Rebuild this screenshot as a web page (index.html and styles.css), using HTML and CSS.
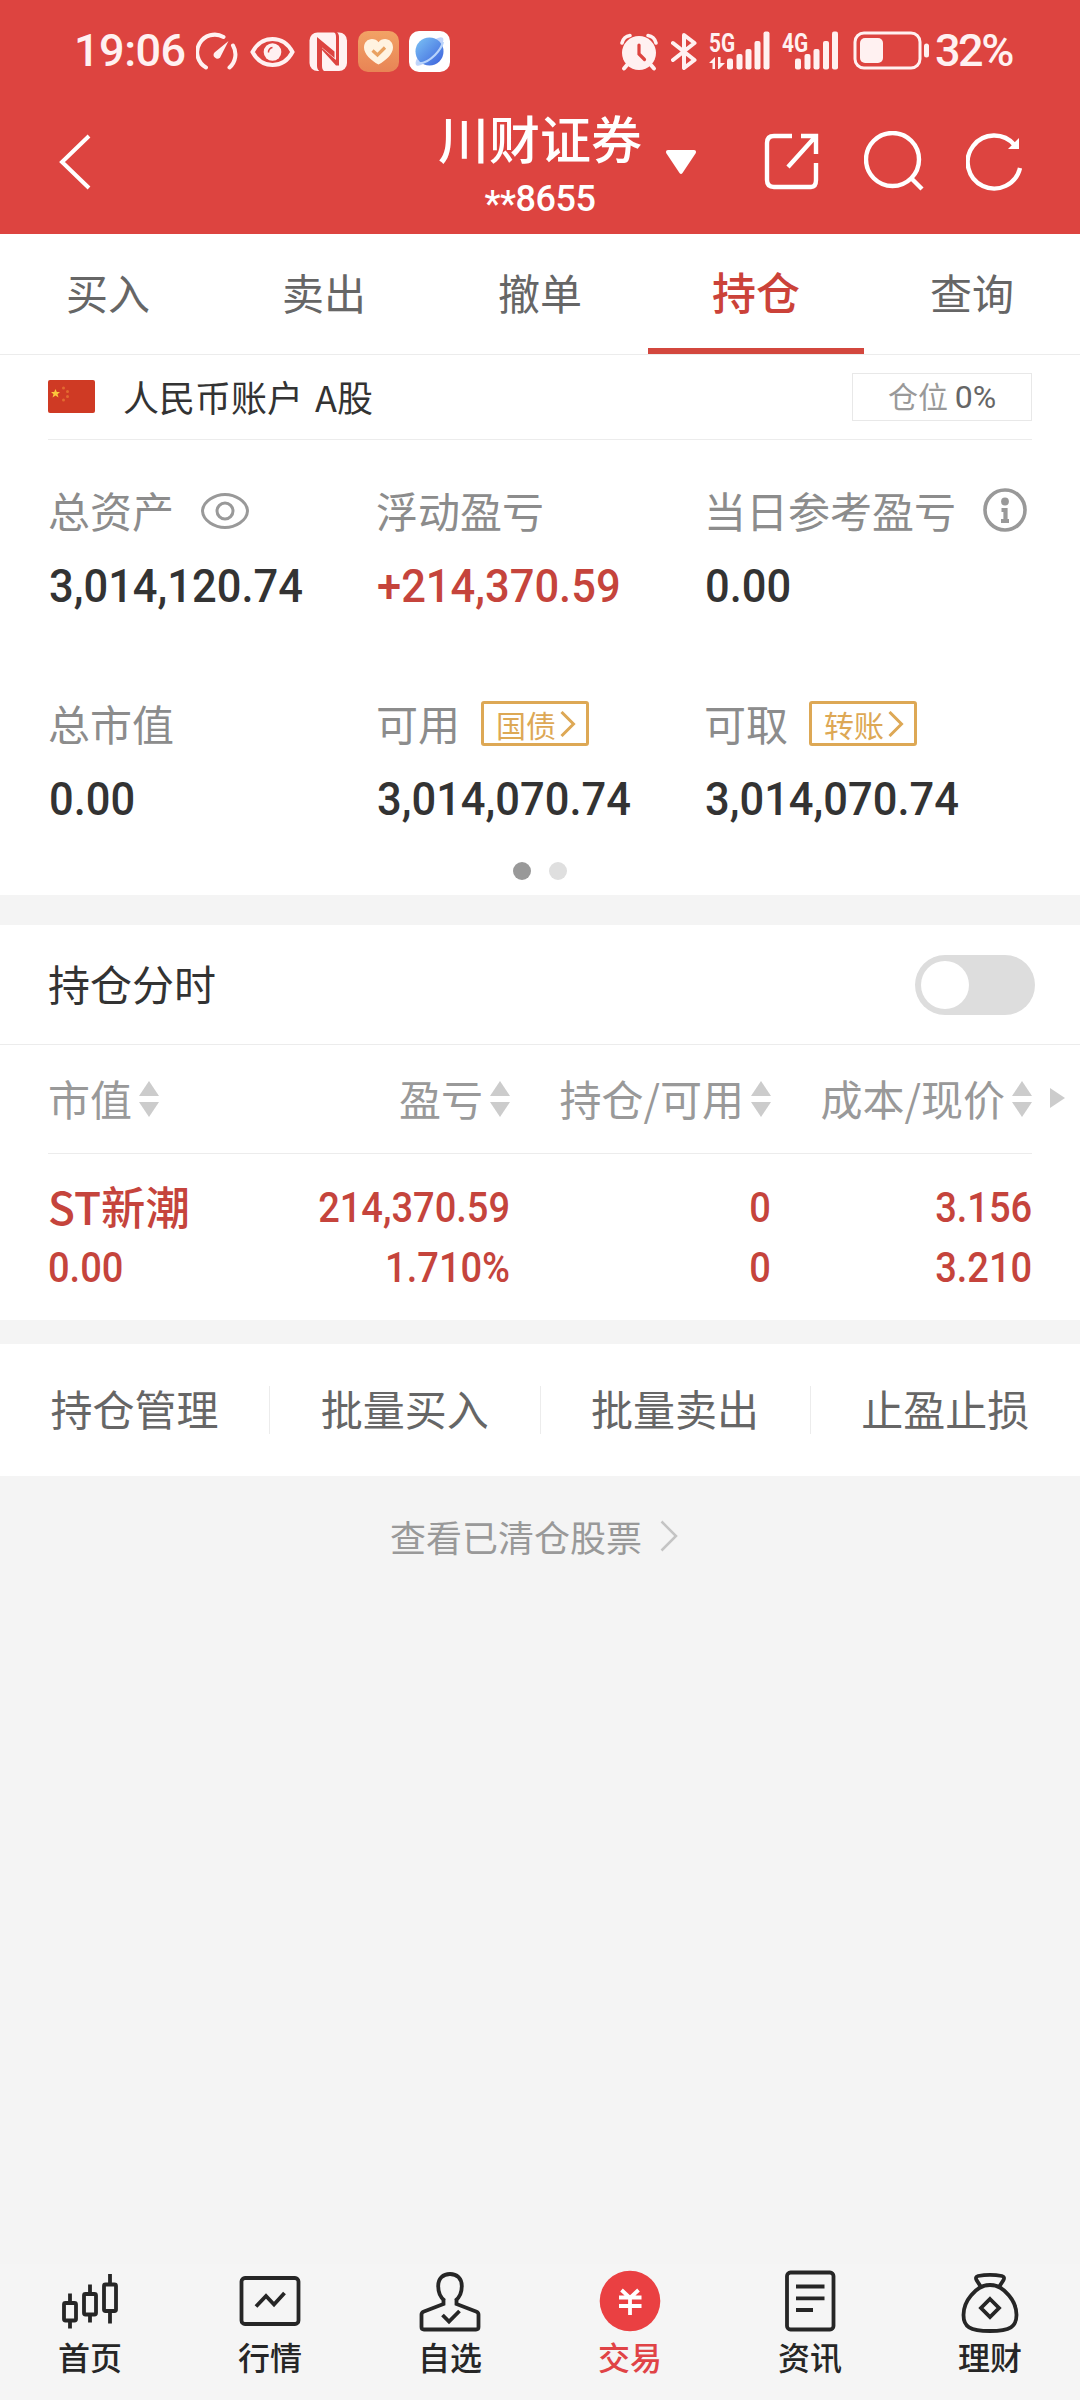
FILE: index.html
```html
<!DOCTYPE html>
<html lang="zh-CN">
<head>
  <meta charset="UTF-8">
  <title>持仓</title>
  <link rel="stylesheet" href="styles.css">
</head>
<body>
  <header class="header">
    <div class="status">
      <div class="status-left">
        <span class="clock">19:06</span>
        <svg class="gauge" width="42" height="42" viewBox="0 0 42 42" fill="none" stroke="#fff1f1" stroke-width="4" stroke-linecap="round">
          <path d="M10 37.5A17.5 17.5 0 0 1 27.5 7"/>
          <path d="M37 15.5A17.5 17.5 0 0 1 33.5 37.5"/>
          <path d="M32.5 11L18.500 22.500a3.800 3.800 0 0 0 5.500 5.200Z" fill="#fff1f1" stroke="none"/>
        </svg>
        <svg class="eye-on" width="48" height="42" viewBox="0 0 48 42" fill="none" stroke="#fff1f1" stroke-width="4">
          <path d="M3.5 22C8 13.500 15 9 23.500 9s15.500 4.500 20 13c-4.500 8.500-11.500 13-20 13S8 30.500 3.500 22Z"/>
          <circle cx="23.500" cy="22" r="8.800" fill="#fff1f1" stroke="none"/>
          <path d="M19.500 22.500a4.500 4.500 0 0 1 4-5" stroke="#dd4440" stroke-width="1.500"/>
        </svg>
        <svg class="nfc" width="40" height="42" viewBox="0 0 40 42">
          <rect x="1.500" y="2.500" width="37.500" height="38.500" rx="8" fill="#fff1f1"/>
          <g fill="#dd4440">
            <path d="M13 42c-2.500-1-4-3-4-6V7l17.500 14.500V28L14 17.500V36c0 3 1 4.500 3 6Z" fill-rule="evenodd"/>
            <path d="M25 1.500c2.500 1 3 3 3 5.500v15l3 3V7c0-2.500-1-4.500-3-5.500ZM14 18v2l14 15.500h3V24l-3-2v8Z"/>
          </g>
        </svg>
        <svg class="app" width="41" height="42" viewBox="0 0 41 42">
          <defs><linearGradient id="health" x1="0" y1="0" x2="0" y2="1"><stop offset="0" stop-color="#f2a265"/><stop offset="1" stop-color="#e88455"/></linearGradient></defs>
          <rect y="1" width="41" height="41" rx="10" fill="url(#health)"/>
          <path d="M20.500 34.500C13 30.500 6 24 6 17.500 6 12.500 9.500 9 14 9c2.500 0 5 1.200 6.500 3.200C22 10.200 24.500 9 27 9c4.500 0 8 3.500 8 8.500 0 6.500-7 13-14.500 17Z" fill="#fff3e0"/>
          <path d="M14.500 20.500l5 4.500 7.500-7.500" fill="none" stroke="#e9a260" stroke-width="3.200"/>
        </svg>
        <svg class="app" width="41" height="42" viewBox="0 0 41 42">
          <defs><linearGradient id="planet" x1="0" y1="0" x2="1" y2="1"><stop offset="0" stop-color="#7cc3f5"/><stop offset="1" stop-color="#3b60dc"/></linearGradient></defs>
          <rect y="1" width="41" height="41" rx="10" fill="#fff"/>
          <ellipse cx="20.500" cy="21.500" rx="19" ry="6" transform="rotate(-46 20.500 21.500)" fill="#c3d5fa"/>
          <circle cx="20.500" cy="21.500" r="14" fill="url(#planet)"/>
          <path d="M8 33c5 1 12-2 18-8 4.500-4.500 7-9 8-13" fill="none" stroke="#b9d4fb" stroke-width="2.200"/>
        </svg>
      </div>
      <div class="status-right">
        <svg class="alarm" width="38" height="42" viewBox="0 0 38 42" fill="none" stroke="#fff1f1" stroke-width="4" stroke-linecap="round">
          <circle cx="19" cy="23" r="17" fill="#fff1f1" stroke="none"/>
          <path d="M2 13c1-4 4-7 8-7.500M36 13c-1-4-4-7-8-7.500" stroke-width="3.500"/>
          <path d="M7 35l-3 3.500M31 35l3 3.500"/>
          <path d="M19 15v9l5.500 5.500" stroke="#dd4440" stroke-width="3.200"/>
        </svg>
        <svg class="bluetooth" width="26" height="42" viewBox="0 0 26 42" fill="none" stroke="#fff1f1" stroke-width="4" stroke-linecap="round" stroke-linejoin="round">
          <path d="M2 13l21.500 17-10.500 8V5l10.500 8L2 30"/>
        </svg>
        <div class="signal">
          <span class="net">5G</span>
          <svg width="62" height="42" viewBox="0 0 62 42" fill="#fff1f1">
            <path d="M0 33l6-6v12H3.500v-6ZM9 27h2.500v6H16l-6 6H9Z"/>
            <rect x="18" y="28.500" width="6" height="11" rx="2"/>
            <rect x="27.500" y="24" width="6" height="15.500" rx="2"/>
            <rect x="36.500" y="19" width="6" height="20.500" rx="2"/>
            <rect x="45.500" y="11" width="6" height="28.500" rx="2"/>
            <rect x="54.500" y="1.500" width="6" height="38" rx="2"/>
          </svg>
        </div>
        <div class="signal second">
          <span class="net">4G</span>
          <svg width="62" height="42" viewBox="0 0 62 42" fill="#fff1f1">
            <rect x="13" y="28.500" width="6" height="11" rx="2"/>
            <rect x="22.500" y="24" width="6" height="15.500" rx="2"/>
            <rect x="31.500" y="19" width="6" height="20.500" rx="2"/>
            <rect x="41" y="11" width="6" height="28.500" rx="2"/>
            <rect x="50" y="1.500" width="6" height="38" rx="2"/>
          </svg>
        </div>
        <svg class="battery" width="78" height="42" viewBox="0 0 78 42">
          <rect x="2" y="3" width="65" height="35" rx="9" fill="none" stroke="#fff1f1" stroke-width="3"/>
          <rect x="7" y="8" width="23" height="25" rx="5" fill="#fff1f1"/>
          <rect x="71" y="13.500" width="5" height="14" rx="2.500" fill="#fff1f1"/>
        </svg>
        <span class="percent">32%</span>
      </div>
    </div>

    <div class="navbar">
      <svg class="back" width="40" height="60" viewBox="0 0 40 60" fill="none" stroke="#fff" stroke-width="4">
        <path d="M33 4L6 30l27 26"/>
      </svg>
      <div class="title">
        <h1>川财证券</h1>
        <p><span class="mask">**</span>8655</p>
      </div>
      <svg class="caret" width="30" height="24" viewBox="0 0 30 24" fill="#fff">
        <path d="M2 0h26c2 0 2.500 2 1.500 3.500L16.500 23c-1 1.300-2 1.300-3 0L.5 3.500C-.5 2 0 0 2 0Z"/>
      </svg>
      <div class="tools">
        <svg width="60" height="60" viewBox="0 0 60 60" fill="none" stroke="#fff" stroke-width="4.400">
          <path d="M30 5H12q-7 0-7 7v37q0 7 7 7h37q5 0 5-7V32"/>
          <path d="M39 5h15v18M54 5L26 36"/>
        </svg>
        <svg width="60" height="60" viewBox="0 0 60 60" fill="none" stroke="#fff" stroke-width="4.400">
          <circle cx="28.500" cy="28.500" r="26.500"/>
          <path d="M46.500 46.500L58 58"/>
        </svg>
        <svg width="60" height="60" viewBox="0 0 60 60" fill="none" stroke="#fff" stroke-width="4.400">
          <path d="M48.500 14A26.500 26.500 0 1 0 54 37"/>
          <path d="M53 7v11H42Z" fill="#fff" stroke="none"/>
        </svg>
      </div>
    </div>
  </header>

  <nav class="tabs">
    <a class="tab">买入</a>
    <a class="tab">卖出</a>
    <a class="tab">撤单</a>
    <a class="tab active">持仓</a>
    <a class="tab">查询</a>
  </nav>

  <section class="account">
    <div class="account-head">
      <svg class="flag" width="47" height="33" viewBox="0 0 47 33">
        <rect width="47" height="33" rx="2" fill="#cf3a24"/>
        <path d="M7.500 9l1.300 3h3.200l-2.500 2.200 1 3.300-3-2-3 2 1-3.300L3 12h3.200Z" fill="#fbc83c"/>
        <g fill="#e26a30"><circle cx="15.500" cy="8" r="1.500"/><circle cx="19.500" cy="11.500" r="1.500"/><circle cx="19.500" cy="16.500" r="1.500"/><circle cx="15.500" cy="20" r="1.500"/></g>
      </svg>
      <span class="account-name">人民币账户 A股</span>
      <span class="position">仓位 <b>0%</b></span>
    </div>

    <div class="assets">
      <div class="asset">
        <div class="label">总资产
          <svg class="eye" width="48" height="36" viewBox="0 0 48 36" fill="none" stroke="#999" stroke-width="3">
            <path d="M1.500 18C2 8 14 1.500 24 1.500S46 8 46.500 18C46 28 34 34.500 24 34.500S2 28 1.500 18Z"/>
            <circle cx="24" cy="18" r="8"/>
          </svg>
        </div>
        <div class="value">3,014,120.74</div>
      </div>
      <div class="asset">
        <div class="label">浮动盈亏</div>
        <div class="value up">+214,370.59</div>
      </div>
      <div class="asset">
        <div class="label">当日参考盈亏
          <svg class="info" width="44" height="44" viewBox="0 0 44 44" fill="none" stroke="#999" stroke-width="3.600">
            <circle cx="22" cy="22" r="20"/>
            <circle cx="22" cy="13.500" r="3.900" fill="#999" stroke="none"/>
            <path d="M18.500 22h4V33M18 33h8" stroke-width="4.200"/>
          </svg>
        </div>
        <div class="value">0.00</div>
      </div>
      <div class="asset">
        <div class="label">总市值</div>
        <div class="value">0.00</div>
      </div>
      <div class="asset">
        <div class="label">可用
          <a class="badge">国债<svg width="16" height="26" viewBox="0 0 16 26" fill="none" stroke="#dda855" stroke-width="3"><path d="M1.500 1L13.500 13l-12 12"/></svg></a>
        </div>
        <div class="value">3,014,070.74</div>
      </div>
      <div class="asset">
        <div class="label">可取
          <a class="badge">转账<svg width="16" height="26" viewBox="0 0 16 26" fill="none" stroke="#dda855" stroke-width="3"><path d="M1.500 1L13.500 13l-12 12"/></svg></a>
        </div>
        <div class="value">3,014,070.74</div>
      </div>
    </div>

    <div class="dots"><i class="on"></i><i></i></div>
  </section>

  <section class="holdings">
    <div class="chart-row">
      <span>持仓分时</span>
      <span class="switch"></span>
    </div>
    <div class="row head">
      <div class="cell">市值<i class="sort"></i></div>
      <div class="cell">盈亏<i class="sort"></i></div>
      <div class="cell">持仓/可用<i class="sort"></i></div>
      <div class="cell">成本/现价<i class="sort"></i></div>
      <i class="more-cols"></i>
    </div>
    <div class="row stock">
      <div class="cell"><span class="name">ST新潮</span><span>0.00</span></div>
      <div class="cell"><span>214,370.59</span><span>1.710%</span></div>
      <div class="cell"><span>0</span><span>0</span></div>
      <div class="cell"><span>3.156</span><span>3.210</span></div>
    </div>
  </section>

  <section class="actions">
    <a>持仓管理</a>
    <a>批量买入</a>
    <a>批量卖出</a>
    <a>止盈止损</a>
  </section>

  <a class="cleared">查看已清仓股票
    <svg width="18" height="32" viewBox="0 0 18 32" fill="none" stroke="#c4c4c4" stroke-width="2.500"><path d="M1.500 1.500L16 16 1.500 30.500"/></svg>
  </a>

  <nav class="bottom">
    <a>
      <svg width="72" height="72" viewBox="0 0 72 72" fill="none" stroke="#262626" stroke-width="3.800">
        <rect x="10" y="39" width="12" height="17.500" rx="1.500"/>
        <path d="M16 29.500V39M16 57v7.500"/>
        <rect x="30" y="30" width="12" height="20.500" rx="1.500"/>
        <path d="M36 20.500V30M36 51v7.500"/>
        <rect x="50" y="20.500" width="12" height="26.500" rx="1.500"/>
        <path d="M56 10v10M56 47v12.500"/>
      </svg>
      <span>首页</span>
    </a>
    <a>
      <svg width="72" height="72" viewBox="0 0 72 72" fill="none" stroke="#262626" stroke-width="3.800">
        <rect x="7.500" y="14" width="57" height="46" rx="3.500"/>
        <path d="M22 42.500l10-10.500 8 8.500L50.500 29"/>
      </svg>
      <span>行情</span>
    </a>
    <a>
      <svg width="72" height="72" viewBox="0 0 72 72" fill="none" stroke="#262626" stroke-width="3.800">
        <path d="M29.500 35v5L10 47.500q-2.500 1-2.500 3V63q0 2.500 2.500 2.500h52q2.500 0 2.500-2.500V50.500q0-2-2.500-3L42.500 40V35"/>
        <path d="M30.500 36.500c-4-3-6.300-7.500-6.300-14.500C24.200 14.500 29 10 36 10s11.800 4.500 11.800 12c0 7-2.300 11.500-6.300 14.500"/>
        <path d="M28.500 51l6.500 6.500L45.500 47"/>
      </svg>
      <span>自选</span>
    </a>
    <a class="active">
      <svg width="72" height="72" viewBox="0 0 72 72" fill="none" stroke="#fff" stroke-width="3.800">
        <circle cx="36" cy="37" r="30.300" fill="#ea4042" stroke="none"/>
        <path d="M27.500 26l8.500 8 8.500-8M25 33.500h22.500M25 42h22.500M36 34v17"/>
      </svg>
      <span>交易</span>
    </a>
    <a>
      <svg width="72" height="72" viewBox="0 0 72 72" fill="none" stroke="#262626" stroke-width="3.800">
        <rect x="13" y="8.500" width="46.500" height="57" rx="3.500"/>
        <path d="M22 22.500h28.500M22 34.300h28.500M22 46h17"/>
      </svg>
      <span>资讯</span>
    </a>
    <a>
      <svg width="72" height="72" viewBox="0 0 72 72" fill="none" stroke="#262626" stroke-width="3.800">
        <path d="M27 23l-4.500-7c-1-2-.5-3.500 1.500-4 8-1.500 16-1.500 24 0 2 .5 2.500 2 1.500 4L45 23"/>
        <path d="M36 21c-8 0-14 4-19 10.500C11.500 38 9.500 45 9.500 51c0 11.500 6 16 26.500 16s26.500-4.500 26.500-16c0-6-2-13-7.500-19.500C50 25 44 21 36 21Z"/>
        <path d="M36 35l9 9-9 9-9-9Z"/>
      </svg>
      <span>理财</span>
    </a>
  </nav>
</body>
</html>
```

FILE: styles.css
```css
* {
  box-sizing: border-box;
}

body {
  margin: 0;
  width: 1080px;
  height: 2400px;
  display: flex;
  flex-direction: column;
  background: #f4f4f4;
  color: #333;
  font-family: "Noto Sans CJK SC", sans-serif;
  font-size: 42px;
}

h1, p {
  margin: 0;
}

svg {
  display: block;
  flex: none;
}

/* header */
.header {
  height: 234px;
  padding-top: 30px;
  background: #dd4440;
  color: #fff;
}

.status {
  display: flex;
  justify-content: space-between;
  height: 42px;
  padding: 0 63px 0 74px;
  color: #fff1f1;
  font-family: Roboto, sans-serif;
  font-weight: 500;
  font-size: 45px;
  line-height: 44px;
}

.status-left, .status-right {
  display: flex;
  align-items: center;
}

.clock {
  width: 122px;
  letter-spacing: -0.5px;
}

.eye-on {
  margin-left: 11px;
}

.nfc {
  margin-left: 11px;
}

.app {
  margin-left: 10px;
}

.bluetooth {
  margin-left: 13px;
}

.signal {
  position: relative;
  margin-left: 12px;
}

.signal.second {
  margin-left: 11px;
}

.net {
  position: absolute;
  top: 1px;
  left: 0;
  font-size: 26px;
  line-height: 24px;
  font-weight: 700;
  transform: scaleX(.8);
  transform-origin: left;
}

.battery {
  margin-left: 9px;
}

.percent {
  width: 82px;
  margin-left: 4px;
  letter-spacing: -2.5px;
}

.navbar {
  display: grid;
  grid-template-columns: 430px 220px 46px 1fr;
  align-items: start;
  padding-top: 30px;
}

.back {
  margin: 30px 0 0 56px;
}

.title {
  text-align: center;
}

.title h1 {
  font-size: 51px;
  line-height: 70px;
  font-weight: 500;
}

.title p {
  font-family: Roboto, sans-serif;
  font-weight: 500;
  font-size: 36px;
  line-height: 40px;
  margin-top: 7px;
  letter-spacing: -0.5px;
}

/* stars sit on the middle of the digits */
.mask {
  position: relative;
  top: 5px;
}

.caret {
  margin: 48px 0 0 16px;
}

.tools {
  display: flex;
  gap: 42px;
  margin: 29px 0 0 66px;
}

/* tabs */
.tabs {
  display: flex;
  height: 121px;
  background: #fff;
  border-bottom: 1px solid #ececec;
}

.tab {
  flex: 1;
  height: 120px;
  line-height: 115px;
  text-align: center;
  color: #666;
}

.tab.active {
  font-size: 44px;
  font-weight: 500;
  color: #cb4239;
  border-bottom: 6px solid #d3473e;
}

/* account */
.account {
  height: 540px;
  background: #fff;
}

.account-head {
  display: flex;
  align-items: center;
  height: 85px;
  margin: 0 48px;
  border-bottom: 1px solid #ececec;
}

.flag {
  margin-top: -2px;
}

.account-name {
  margin: -3px 0 0 28px;
  font-size: 36px;
  line-height: 60px;
  word-spacing: 4px;
  color: #333;
}

.position {
  width: 180px;
  height: 48px;
  margin-left: auto;
  border: 1px solid #e8e8e8;
  font-size: 30px;
  line-height: 43px;
  text-align: center;
  color: #999;
}

.position b {
  font-family: Roboto, sans-serif;
  font-weight: 400;
  font-size: 32px;
  color: #666;
}

.assets {
  display: grid;
  grid-template-columns: 328px 328px 1fr;
  row-gap: 79px;
  padding: 41px 0 0 49px;
}

.label {
  display: flex;
  align-items: center;
  height: 60px;
  margin-left: -1px;
  line-height: 56px;
  padding-bottom: 3px;
  color: #8c8c8c;
}

.eye {
  margin: 3px 0 0 27px;
}

.info {
  margin: 1px 0 0 27px;
}

.badge {
  display: flex;
  align-items: center;
  width: 108px;
  height: 45px;
  margin: 2px 0 0 21px;
  padding-left: 12px;
  border: 3px solid #dda855;
  border-radius: 3px;
  color: #dda855;
  font-size: 30px;
  line-height: 36px;
}

.badge svg {
  margin-left: 4px;
}

.value {
  margin-top: 15px;
  height: 59px;
  line-height: 60px;
  font-family: Roboto, sans-serif;
  font-weight: 500;
  font-size: 47px;
  transform: scaleX(.925);
  transform-origin: left;
}

.value.up {
  color: #c5443c;
}

.dots {
  display: flex;
  justify-content: center;
  gap: 18px;
  margin-top: 34px;
}

.dots i {
  width: 18px;
  height: 18px;
  border-radius: 50%;
  background: #dfdfdf;
}

.dots i.on {
  background: #999;
}

/* holdings */
.holdings {
  height: 395px;
  margin-top: 30px;
  background: #fff;
}

.chart-row {
  display: flex;
  justify-content: space-between;
  align-items: center;
  height: 120px;
  padding: 0 45px 0 48px;
  border-bottom: 1px solid #ececec;
}

.chart-row span:first-child {
  line-height: 60px;
  padding-bottom: 4px;
}

.switch {
  width: 120px;
  height: 60px;
  padding: 6px;
  border-radius: 30px;
  background: #ddd;
}

.switch::before {
  content: "";
  display: block;
  width: 48px;
  height: 48px;
  border-radius: 50%;
  background: #fff;
}

.row {
  position: relative;
  display: grid;
  grid-template-columns: 162px 300px 261px 261px;
  margin: 0 48px;
}

.row.head {
  height: 109px;
  line-height: 100px;
  color: #999;
  border-bottom: 1px solid #ececec;
}

.head .cell {
  display: flex;
  align-items: center;
  justify-content: flex-end;
  padding-bottom: 3px;
  white-space: nowrap;
}

.head .cell:first-child {
  justify-content: flex-start;
}

/* pair of up/down arrows */
.sort {
  display: grid;
  gap: 6px;
  margin: 3px 0 0 7px;
}

.sort::before, .sort::after {
  content: "";
  border: 10.5px solid transparent;
}

.sort::before {
  border-top: 0;
  border-bottom: 15px solid #ccc;
}

.sort::after {
  border-bottom: 0;
  border-top: 15px solid #ccc;
}

.more-cols {
  position: absolute;
  right: -33px;
  top: 43px;
  border: 10.5px solid transparent;
  border-left: 15px solid #ccc;
  border-right: 0;
}

.stock {
  padding-top: 24px;
  color: #c5443c;
  font-family: Roboto, sans-serif;
  font-weight: 500;
}

.stock .cell {
  display: flex;
  flex-direction: column;
  align-items: flex-end;
  line-height: 60px;
}

.stock span {
  transform: scaleX(.905);
  transform-origin: right;
}

.stock .cell:first-child {
  align-items: flex-start;
}

.stock .cell:first-child span {
  transform-origin: left;
}

.stock .cell .name {
  height: 60px;
  line-height: 56px;
  font-family: "Noto Sans CJK SC", sans-serif;
  font-size: 45px;
  white-space: nowrap;
  transform: scaleX(.985);
}

/* actions */
.actions {
  display: flex;
  align-items: center;
  height: 132px;
  margin-top: 24px;
  background: #fff;
  color: #666;
}

.actions a {
  flex: 1;
  height: 48px;
  line-height: 43px;
  text-align: center;
  border-right: 1px solid #ececec;
}

.actions a:last-child {
  border-right: 0;
}

.cleared {
  display: flex;
  justify-content: center;
  align-items: center;
  gap: 18px;
  height: 60px;
  margin-top: 31px;
  padding: 0 12px 3px 0;
  font-size: 36px;
  line-height: 56px;
  color: #999;
}

/* bottom bar */
.bottom {
  display: flex;
  height: 136px;
  margin-top: auto;
  background: #f5f5f5;
}

.bottom a {
  flex: 1;
  display: flex;
  flex-direction: column;
  align-items: center;
  color: #262626;
  font-size: 32px;
  font-weight: 500;
  line-height: 40px;
}

.bottom .active {
  color: #e04346;
}
```
